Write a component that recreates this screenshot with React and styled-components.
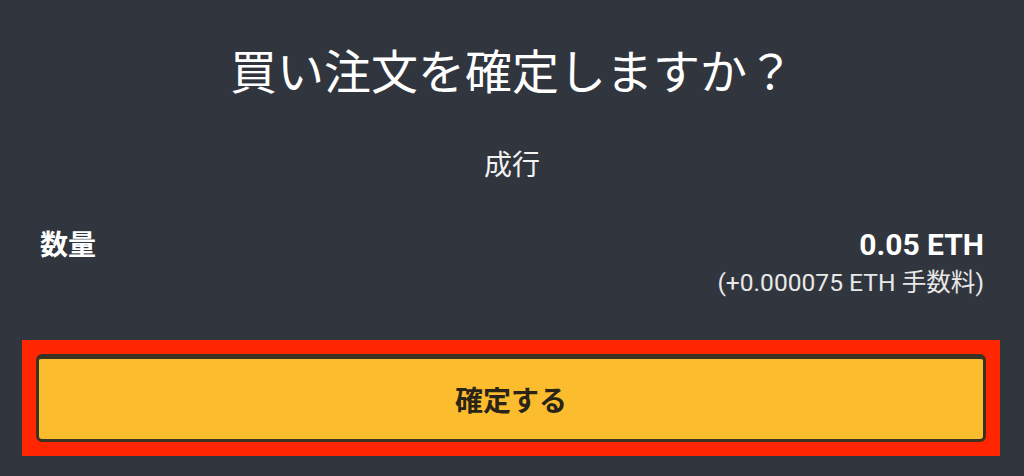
import React from 'react';
import styled, { createGlobalStyle } from 'styled-components';

const GlobalStyle = createGlobalStyle`
    html, body {
        margin: 0;
        padding: 0;
        background-color: #31363e;
    }
    body {
        font-family: Roboto, "Noto Sans CJK JP", sans-serif;
        color: #ffffff;
    }
`;

const Screen = styled.div`
    width: 1024px;
    height: 476px;
    display: flex;
    flex-direction: column;
    overflow: hidden;
`;

const Title = styled.h1`
    margin: 42px 0 0 0;
    text-align: center;
    font-weight: 400;
    font-size: 47px;
    line-height: 62px;
`;

const OrderType = styled.div`
    margin-top: 44px;
    text-align: center;
    font-size: 28px;
    line-height: 36px;
    color: #f2f2f2;
`;

const Row = styled.div`
    margin-top: 44px;
    padding: 0 40px;
    display: flex;
    justify-content: space-between;
    align-items: flex-start;
`;

const Label = styled.div`
    font-weight: 700;
    font-size: 28px;
    line-height: 36px;
`;

const Values = styled.div`
    display: flex;
    flex-direction: column;
    align-items: flex-end;
`;

const Amount = styled.div`
    font-weight: 700;
    font-size: 30px;
    line-height: 34px;
`;

const Fee = styled.div`
    margin-top: 4px;
    font-size: 24.6px;
    line-height: 34px;
    color: #e8e8e8;
`;

const HighlightFrame = styled.div`
    margin: 40px 24px 0 22px;
    padding: 14px;
    background-color: #ff2600;
    display: flex;
`;

const ConfirmButton = styled.button`
    flex: 1;
    height: 88px;
    box-sizing: border-box;
    border: 3px solid #3a3222;
    border-top-width: 5px;
    border-radius: 6px;
    background-color: #fbbd2e;
    font-family: Roboto, "Noto Sans CJK JP", sans-serif;
    font-weight: 700;
    font-size: 28px;
    color: #2a2418;
    cursor: pointer;
`;

const App = () => {
    return (
        <Screen>
            <GlobalStyle />
            <Title>買い注文を確定しますか？</Title>
            <OrderType>成行</OrderType>
            <Row>
                <Label>数量</Label>
                <Values>
                    <Amount>0.05 ETH</Amount>
                    <Fee>(+0.000075 ETH 手数料)</Fee>
                </Values>
            </Row>
            <HighlightFrame>
                <ConfirmButton type="button">確定する</ConfirmButton>
            </HighlightFrame>
        </Screen>
    );
};

export default App;
